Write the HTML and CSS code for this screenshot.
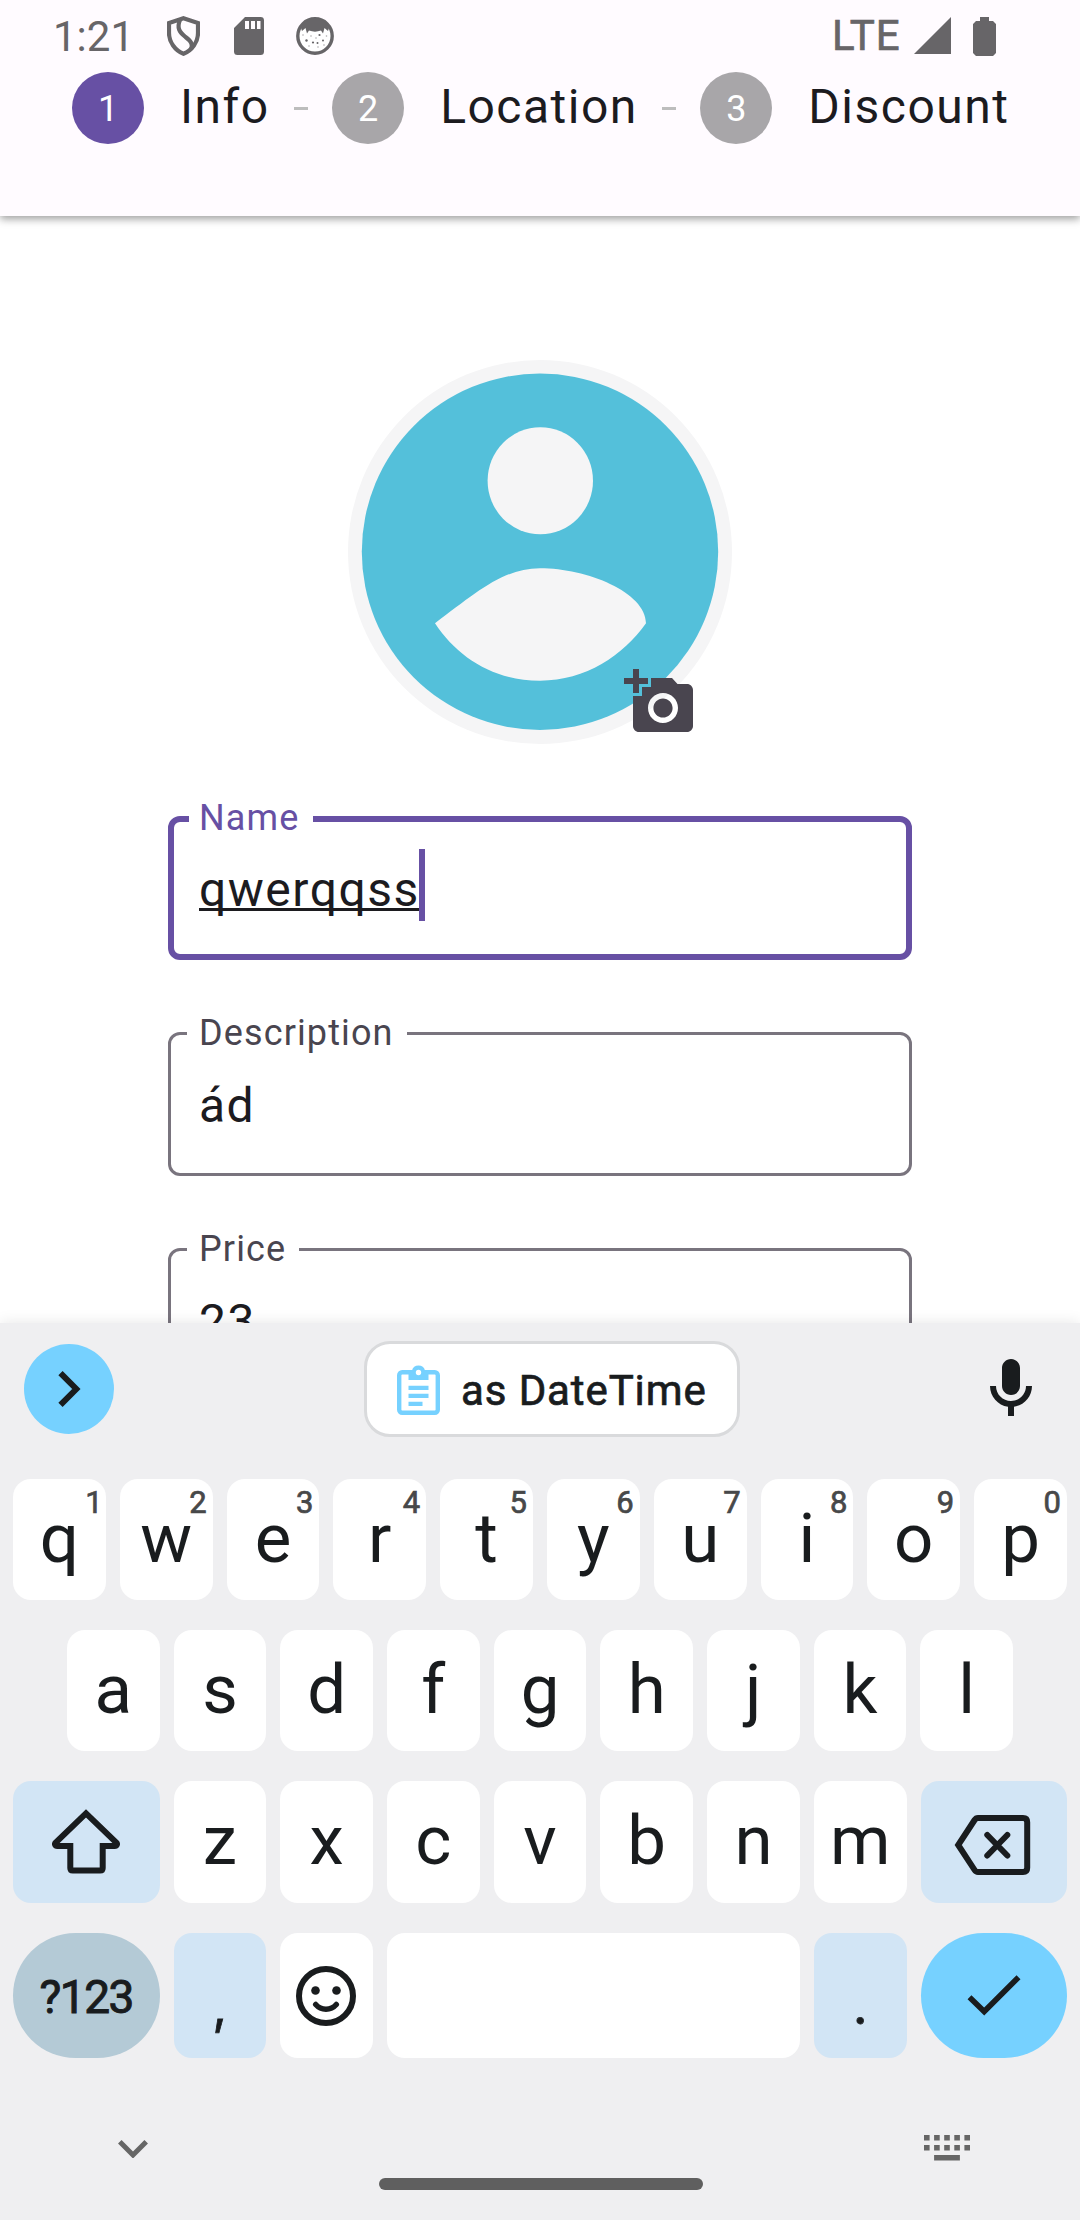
FILE: index.html
```html
<!DOCTYPE html>
<html lang="en">
<head>
<meta charset="utf-8">
<title>Info</title>
<link rel="stylesheet" href="styles.css">
</head>
<body>
<div class="phone">
  <header class="header">
    <div class="status">
      <span class="clock">1:21</span>
      <svg class="shield" width="33" height="40" viewBox="0 0 33 40" fill="none" stroke="#676568" stroke-width="4.200"><path d="M16.500 2.200 31 7v10c0 9-6 17.600-14.500 20.800C8 34.600 2 26 2 17V7z"/><path d="M13 4c-3.500 8-.5 12 5.500 17 6 4.500 7.500 7.500 5.500 12"/></svg>
      <svg class="sd" width="30" height="38" viewBox="0 0 30 38"><path fill="#676568" d="M11 0h15.500A3.500 3.500 0 0 1 30 3.500v31a3.500 3.500 0 0 1-3.500 3.500h-23A3.500 3.500 0 0 1 0 34.500V11z"/><path fill="#fffbff" d="M11 4h4v8h-4zM17 4h4v8h-4zM23 4h3.500v8H23z"/></svg>
      <svg class="cat" width="38" height="38" viewBox="0 0 38 38"><circle cx="19" cy="19" r="17.200" fill="#fff" stroke="#676568" stroke-width="3.400"/><path fill="#676568" d="M5 11C9 4 14 1.500 19 1.500S29 4 33 11l-1 3-3.500-3-1.500 5.500-2-3c-4 1.500-8 1.500-12 0l-2 3L9.500 11 6 14z"/><g fill="#676568"><circle cx="10.500" cy="23.500" r="1.200"/><circle cx="17" cy="25.500" r="1.100"/><circle cx="23.500" cy="18" r="1.100"/><circle cx="27" cy="23.500" r="1"/><circle cx="21.500" cy="26" r="1"/></g><g fill="#aaa8ab"><circle cx="15" cy="19" r=".8"/><circle cx="7" cy="18" r=".8"/><circle cx="30.500" cy="19" r=".8"/><circle cx="13" cy="29" r=".8"/><circle cx="22" cy="30" r=".8"/><circle cx="28" cy="28" r=".8"/><circle cx="20" cy="21" r=".8"/></g></svg>
      <span class="lte">LTE</span>
      <svg class="signal" width="37" height="37" viewBox="0 0 37 37"><path fill="#676568" d="M37 0v37H0z"/></svg>
      <svg class="battery" width="23" height="39" viewBox="0 0 23 39"><path fill="#676568" d="M7 0h9v4h4l3 3v29l-3 3H3l-3-3V7l3-3h4z"/></svg>
    </div>
    <nav class="steps">
      <span class="dot active">1</span><span class="step">Info</span><i class="dash"></i>
      <span class="dot">2</span><span class="step">Location</span><i class="dash"></i>
      <span class="dot">3</span><span class="step">Discount</span>
    </nav>
  </header>

  <main class="form">
    <div class="avatar">
      <svg width="384" height="384" viewBox="0 0 384 384"><circle cx="192" cy="192" r="192" fill="#f5f5f6"/><circle cx="192" cy="191.700" r="178.200" fill="#54c0da"/><ellipse cx="192.300" cy="120.800" rx="52.700" ry="53.500" fill="#f5f5f6"/><path fill="#f5f5f6" d="M87 263.300C129 232 155 208.300 192 208.300c47 0 106 24 106 55-23 32-60 57.400-106 57.400S110 298 87 263.300z"/></svg>
      <svg class="camera" width="72" height="72" viewBox="0 0 24 24"><path fill="#49454f" d="M3 4V1h2v3h3v2H5v3H3V6H0V4h3zm3 6V7h3V4h7l1.830 2H21c1.100 0 2 .9 2 2v12c0 1.100-.9 2-2 2H5c-1.100 0-2-.9-2-2V10h3zm7 9c2.760 0 5-2.240 5-5s-2.240-5-5-5-5 2.240-5 5 2.240 5 5 5zm-3.200-5c0 1.770 1.430 3.200 3.200 3.200s3.200-1.430 3.200-3.200-1.430-3.200-3.200-3.200-3.200 1.430-3.200 3.200z"/></svg>
    </div>
    <div class="field focused"><label>Name</label><span class="value typed">qwerqqss</span><i class="caret"></i></div>
    <div class="field"><label>Description</label><span class="value">ád</span></div>
    <div class="field"><label>Price</label><span class="value">23</span></div>
  </main>

  <section class="keyboard">
    <div class="toolbar">
      <button class="expand"><svg width="90" height="90" viewBox="0 0 90 90"><path d="M36.500 29.200 52.300 45 36.500 60.800" fill="none" stroke="#191c1e" stroke-width="6"/></svg></button>
      <button class="chip">
        <svg width="43" height="50" viewBox="0 0 43 50"><rect x="2.200" y="7.200" width="38.600" height="40.600" rx="3" fill="none" stroke="#76d1ff" stroke-width="4.400"/><path fill="#76d1ff" d="M11.500 5.500h3.500a6.700 6.700 0 0 1 13 0h3.500V15h-20zM11.500 20.700h20v4.200h-20zM11.500 28.700h20v4.200h-20zM11.500 36.700h14v4.200h-14z"/><circle cx="21.500" cy="7.500" r="2.700" fill="#fff"/></svg>
        <span>as DateTime</span>
      </button>
      <svg class="mic" width="72" height="72" viewBox="0 0 24 24"><path fill="#191c1e" d="M12 14c1.660 0 3-1.340 3-3V5c0-1.660-1.340-3-3-3S9 3.340 9 5v6c0 1.660 1.340 3 3 3zm5-3c0 2.760-2.240 5-5 5s-5-2.240-5-5H5c0 3.530 2.610 6.430 6 6.920V21h2v-3.080c3.390-.49 6-3.390 6-6.920h-2z"/></svg>
    </div>
    <div class="rows">
      <div class="row">
        <b class="key">q<sup class="one">1</sup></b><b class="key">w<sup>2</sup></b><b class="key">e<sup>3</sup></b><b class="key">r<sup>4</sup></b><b class="key">t<sup>5</sup></b><b class="key">y<sup>6</sup></b><b class="key">u<sup>7</sup></b><b class="key">i<sup>8</sup></b><b class="key">o<sup>9</sup></b><b class="key">p<sup>0</sup></b>
      </div>
      <div class="row inset">
        <b class="key">a</b><b class="key">s</b><b class="key">d</b><b class="key">f</b><b class="key">g</b><b class="key">h</b><b class="key">j</b><b class="key">k</b><b class="key">l</b>
      </div>
      <div class="row third">
        <b class="key wide tint"><svg width="72" height="72" viewBox="0 0 72 72" fill="none" stroke="#191c1e" stroke-width="6"><path d="M20.300 40H7.300c-2.200 0-3-2-1.600-3.500L36 7.300l30.300 29.200c1.400 1.500.6 3.500-1.600 3.500h-12v22c0 1.600-.9 2.500-2.500 2.500H22.800c-1.600 0-2.500-.9-2.500-2.500z"/></svg></b><b class="key">z</b><b class="key">x</b><b class="key">c</b><b class="key">v</b><b class="key">b</b><b class="key">n</b><b class="key">m</b><b class="key wide tint"><svg width="84" height="72" viewBox="0 0 84 72" fill="none" stroke="#191c1e" stroke-width="6"><path d="M26 12h45c2.700 0 4.200 1.500 4.200 4.200v45.600c0 2.700-1.500 4.200-4.200 4.200H26c-1.500 0-2.500-.6-3.400-2L6.200 39 22.600 14c.9-1.400 1.900-2 3.400-2z"/><path stroke-linecap="round" d="m35.300 29 20 20.500m0-20.500-20 20.500"/></svg></b>
      </div>
      <div class="row fourth">
        <b class="key wide symbols">?123</b><b class="key tint punct">,</b><b class="key"><svg width="60" height="60" viewBox="0 0 60 60" fill="none" stroke="#191c1e" stroke-width="6"><circle cx="30" cy="30" r="27"/><path stroke-linecap="round" stroke-width="5.500" d="M19.700 38.500c5.500 6.200 15.100 6.200 20.600 0"/><g fill="#191c1e" stroke="none"><circle cx="19.500" cy="24.500" r="4.300"/><circle cx="40.500" cy="24.500" r="4.300"/></g></svg></b><b class="key space"></b><b class="key tint punct">.</b><b class="key wide enter"><svg width="60" height="60" viewBox="0 0 60 60"><path d="m5.500 32 14.700 14.300L54.500 12" transform="translate(0 -.8)" fill="none" stroke="#191c1e" stroke-width="5.600"/></svg></b>
      </div>
    </div>
    <footer class="navbar">
      <svg width="30" height="18" viewBox="0 0 30 18"><path d="M1.800 1.800 15 15 28.200 1.800" fill="none" stroke="#666" stroke-width="5"/></svg>
      <i class="home"></i>
      <svg width="46" height="26" viewBox="0 0 46 26"><path fill="#666" d="M0 0h5.600v5.600H0zM10.100 0h5.600v5.600h-5.600zM20.200 0h5.600v5.600h-5.600zM30.300 0h5.600v5.600h-5.600zM40.400 0H46v5.600h-5.600zM0 10h5.600v5.600H0zM10.100 10h5.600v5.600h-5.600zM20.200 10h5.600v5.600h-5.600zM30.300 10h5.600v5.600h-5.600zM40.400 10H46v5.600h-5.600zM10.100 20h25.800v5.600H10.100z"/></svg>
    </footer>
  </section>
</div>
</body>
</html>
```
FILE: styles.css
```css
* { box-sizing: border-box; }
body { margin: 0; font-family: Roboto, "Liberation Sans", sans-serif; color: #1c1b1f; }
svg { display: block; flex: none; }
button { border: 0; padding: 0; font: inherit; }

.phone { width: 1080px; height: 2220px; display: flex; flex-direction: column; overflow: hidden; background: #fff; }

.header { height: 216px; flex: none; background: #fffbff; box-shadow: 0 3px 8px rgba(0, 0, 0, .38); }
.status { height: 72px; padding: 0 84px 0 53px; display: flex; align-items: center; color: #676568; font-size: 42px; line-height: 46px; }
.clock { width: 114px; margin-top: 1px; }
.sd { margin-left: 34px; }
.cat { margin-left: 32px; }
.lte { margin-left: auto; width: 82px; letter-spacing: .8px; -webkit-text-stroke: .7px #676568; }
.battery { margin-left: 22px; }
.signal { margin-top: -1px; }

.steps { height: 72px; padding-left: 72px; display: flex; align-items: center; }
.dot { width: 72px; height: 72px; flex: none; border-radius: 50%; background: #a8a6a9; color: #fff; font-size: 36px; line-height: 74px; text-align: center; }
.dot.active { background: #6750a4; }
.step { margin: -2px 0 0 36px; font-size: 48px; line-height: 72px; letter-spacing: 1.5px; white-space: nowrap; }
.dash { width: 14.500px; height: 3px; margin: 0 24px; background: #bdbdbd; flex: none; }

.form { flex: none; height: 1107px; overflow: hidden; padding: 144px 168px 0; display: flex; flex-direction: column; align-items: stretch; }
.avatar { position: relative; width: 384px; height: 384px; flex: none; align-self: center; margin-bottom: 72px; }
.camera { position: absolute; left: 276px; top: 306px; }

.field { position: relative; flex: none; height: 144px; margin-bottom: 72px; padding: 30px 28px 0; border: 3px solid #79747e; border-radius: 12px; display: flex; align-items: flex-start; }
.field label { position: absolute; left: 16px; top: -23px; padding: 0 13px 0 12px; background: #fff; color: #49454f; font-size: 36px; line-height: 42px; letter-spacing: 1.125px; }
.value { font-size: 48px; line-height: 81px; letter-spacing: 1.500px; }
.focused { border: 6px solid #6750a4; padding: 27px 25px 0; }
.focused label { left: 15px; top: -25px; padding: 0 14px 0 10px; color: #6750a4; }
.typed { text-decoration: underline; text-decoration-thickness: 3px; text-underline-offset: 2px; text-decoration-skip-ink: none; }
.caret { width: 6px; height: 72px; margin-left: -1px; background: #6750a4; }

.keyboard { position: relative; flex: none; height: 897px; background: #efeff1; color: #191c1e; box-shadow: 0 0 14px rgba(0, 0, 0, .1); display: flex; flex-direction: column; }
.toolbar { height: 156px; padding: 0 33px 24px 24px; display: flex; align-items: center; justify-content: space-between; }
.expand { width: 90px; height: 90px; border-radius: 50%; background: #76d1ff; }
.chip { width: 376px; height: 96px; margin-left: 15px; padding: 2px 0 0 30px; display: flex; align-items: center; gap: 21px; background: #fff; border: 3px solid #d9dadc; border-radius: 26px; color: #191c1e; font-size: 42px; line-height: 48px; letter-spacing: .9px; -webkit-text-stroke: .7px #191c1e; white-space: nowrap; }
.chip span { margin-top: 2px; }

.rows { padding: 0 13px; display: flex; flex-direction: column; gap: 30px; }
.row { height: 121px; display: flex; gap: 14px; }
.inset { padding: 0 54px; }
.third { height: 122px; }
.fourth { height: 125px; }
.key { position: relative; flex: 1 1 0; min-width: 0; border-radius: 18px; background: #fff; display: flex; align-items: center; justify-content: center; font-size: 69px; font-weight: 400; line-height: 117px; }
.row:not(.third):not(.fourth) .key { padding-bottom: 3px; }
.third .key:not(.wide) { padding-bottom: 4px; }
.key sup { position: absolute; right: 6px; top: 6px; font-size: 31px; line-height: 36px; color: #474849; -webkit-text-stroke: .7px #474849; }
.key .one { right: 3px; }
.tint { background: #d2e5f5; }
.wide { flex: 0 0 146.500px; }
.symbols { border-radius: 63px; background: #b4cad6; font-size: 46px; letter-spacing: -1.5px; padding-top: 3px; -webkit-text-stroke: 1px #191c1e; }
.punct { font-family: Inter, sans-serif; font-size: 50px; padding-top: 22px; -webkit-text-stroke: .8px #191c1e; }
.space { flex: 0 0 413.500px; }
.enter { border-radius: 63px; background: #76d1ff; }

.navbar { margin-top: 76px; padding: 0 110px 0 118px; display: flex; justify-content: space-between; align-items: flex-start; }
.navbar svg:first-child { margin-top: 6px; }
.navbar svg:last-child { margin-top: 1px; }
.home { width: 324px; height: 12px; margin: 44px 0 0 10px; border-radius: 6px; background: #5f5f5f; }
```
